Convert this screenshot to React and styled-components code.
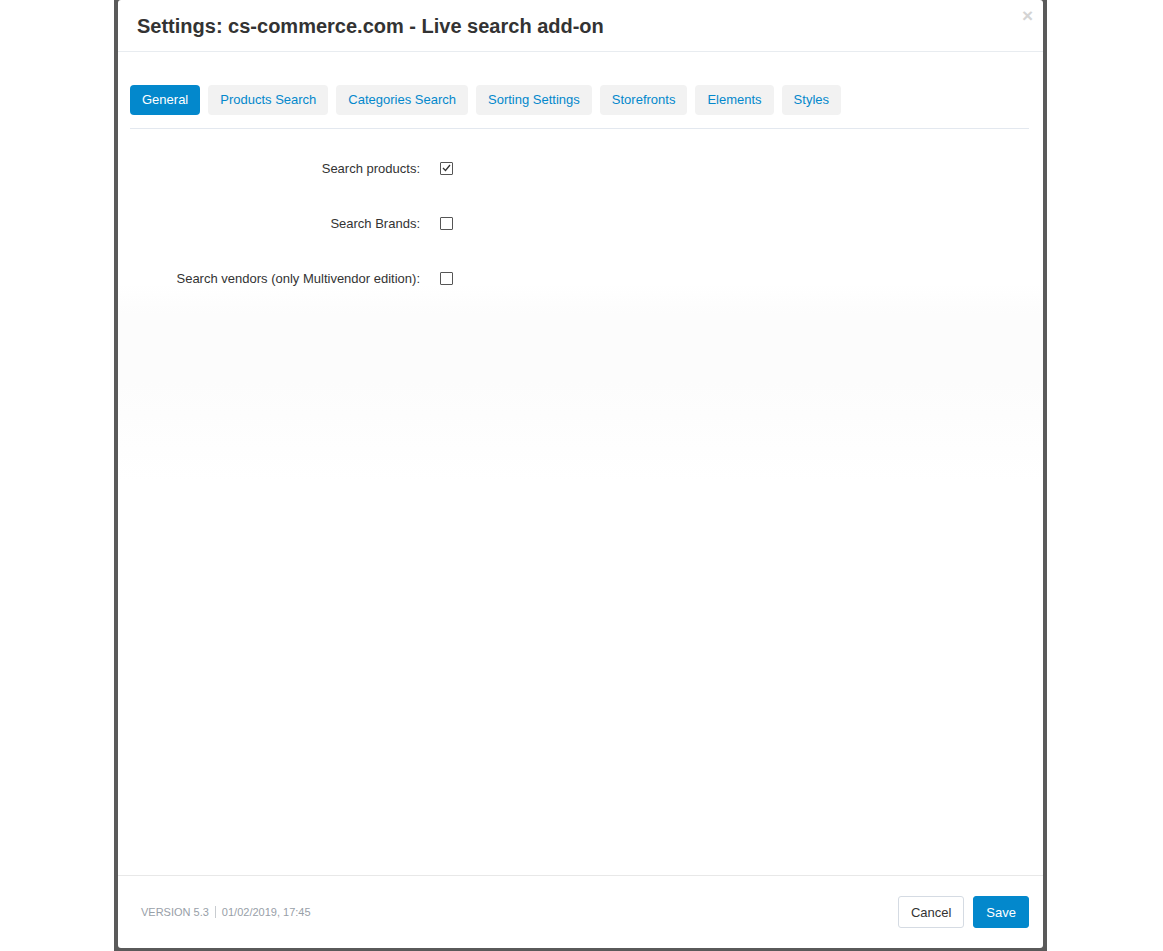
import React from 'react';
import styled, {createGlobalStyle} from 'styled-components';

const GlobalStyle = createGlobalStyle`
  html, body {
    margin: 0;
    padding: 0;
    background: #fff;
  }
  body {
    font-family: "Liberation Sans", Arial, sans-serif;
    color: #333;
  }
`;

const COLOR = {
    PRIMARY: '#0388cc',
    TAB_BG: '#f2f2f2',
    TEXT: '#333',
    LINE: '#e3e8ef',
    MUTED: '#98a0a8',
};

const Backdrop = styled.div`
  margin-left: 114px;
  width: 933px;
  height: 951px;
  background: #5a5a5a;
  padding: 0 4px 3px 4px;
  box-sizing: border-box;
`;

const Modal = styled.div`
  width: 925px;
  height: 948px;
  background: #fff;
  border-radius: 3px;
  display: flex;
  flex-direction: column;
  box-sizing: border-box;
`;

const Header = styled.div`
  position: relative;
  height: 52px;
  border-bottom: 1px solid #e8ecf0;
  box-sizing: border-box;
  display: flex;
  align-items: center;
  padding: 2px 20px 0 19px;
`;

const Title = styled.h3`
  margin: 0;
  font-size: 20px;
  font-weight: bold;
  color: #333;
`;

const Close = styled.span`
  position: absolute;
  right: 10px;
  top: 6px;
  font-size: 19px;
  font-weight: bold;
  color: #d4d4d4;
  line-height: 20px;
`;

const Body = styled.div`
  flex: 1;
  padding: 33px 14px 0 12px;
  background: linear-gradient(to bottom, #fff 0, #fff 232px, #fcfcfc 262px, #fcfcfc 330px, #fff 430px);
`;

const Tabs = styled.div`
  display: flex;
  gap: 8px;
  padding-bottom: 13px;
  border-bottom: 1px solid ${COLOR.LINE};
`;

const Tab = styled.span`
  display: inline-flex;
  align-items: center;
  height: 30px;
  padding: 0 12px 1px;
  box-sizing: border-box;
  border-radius: 4px;
  font-size: 13px;
  background: ${p => p.$active ? COLOR.PRIMARY : COLOR.TAB_BG};
  color: ${p => p.$active ? '#fff' : COLOR.PRIMARY};
`;

const Form = styled.div`
  display: flex;
  flex-direction: column;
  gap: 29px;
  padding-top: 26px;
`;

const Row = styled.div`
  display: grid;
  grid-template-columns: 290px 13px;
  column-gap: 20px;
  align-items: center;
  height: 26px;
`;

const Label = styled.label`
  text-align: right;
  font-size: 13px;
  color: ${COLOR.TEXT};
`;

const Box = styled.span`
  width: 13px;
  height: 13px;
  box-sizing: border-box;
  border: 1px solid #555;
  border-radius: 1px;
  background: #fff;
  display: flex;
  align-items: center;
  justify-content: center;
`;

const Footer = styled.div`
  height: 73px;
  border-top: 1px solid #e8e8e8;
  box-sizing: border-box;
  display: flex;
  align-items: center;
  justify-content: space-between;
  padding: 0 14px 0 23px;
`;

const Version = styled.div`
  display: flex;
  align-items: center;
  font-size: 11px;
  color: ${COLOR.MUTED};
`;

const Divider = styled.span`
  width: 1px;
  height: 12px;
  background: #c8ccd0;
  margin: 0 6px;
`;

const Buttons = styled.div`
  display: flex;
  gap: 9px;
`;

const Button = styled.button`
  height: 32px;
  padding: 0 12px;
  border-radius: 3px;
  font-family: "Liberation Sans", Arial, sans-serif;
  font-size: 13px;
  border: 1px solid ${p => p.$primary ? COLOR.PRIMARY : '#d5dbe3'};
  background: ${p => p.$primary ? COLOR.PRIMARY : '#fff'};
  color: ${p => p.$primary ? '#fff' : '#333'};
`;

const tabs = ['General', 'Products Search', 'Categories Search', 'Sorting Settings', 'Storefronts', 'Elements', 'Styles'];

const fields = [
    {label: 'Search products:', checked: true},
    {label: 'Search Brands:', checked: false},
    {label: 'Search vendors (only Multivendor edition):', checked: false},
];

function Checkbox({checked}) {
    return (
        <Box>
            {checked &&
                <svg width="9" height="8" viewBox="0 0 9 8">
                    <path d="M1 4 L3.5 6.5 L8 1" fill="none" stroke="#333" strokeWidth="1.3"/>
                </svg>
            }
        </Box>
    );
}

export default function App() {
    return (
        <>
            <GlobalStyle/>
            <Backdrop>
                <Modal>
                    <Header>
                        <Title>Settings: cs-commerce.com - Live search add-on</Title>
                        <Close>×</Close>
                    </Header>
                    <Body>
                        <Tabs>
                            {tabs.map((t, i) => <Tab key={t} $active={i === 0}>{t}</Tab>)}
                        </Tabs>
                        <Form>
                            {fields.map(f =>
                                <Row key={f.label}>
                                    <Label>{f.label}</Label>
                                    <Checkbox checked={f.checked}/>
                                </Row>
                            )}
                        </Form>
                    </Body>
                    <Footer>
                        <Version>
                            VERSION 5.3<Divider/>01/02/2019, 17:45
                        </Version>
                        <Buttons>
                            <Button>Cancel</Button>
                            <Button $primary>Save</Button>
                        </Buttons>
                    </Footer>
                </Modal>
            </Backdrop>
        </>
    );
}
